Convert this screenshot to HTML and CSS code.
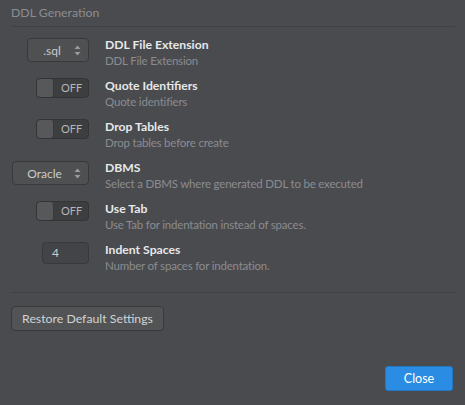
FILE: index.html
```html
<!DOCTYPE html>
<html>
<head>
<meta charset="utf-8">
<link rel="stylesheet" href="styles.css">
</head>
<body>
<div class="dialog">
  <div class="section-title">DDL Generation</div>
  <div class="rows">
    <div class="row">
      <div class="ctl">
        <div class="select sel-sql"><span class="sel-text">.sql</span><svg class="arrows" width="7" height="11" viewBox="0 0 7 11"><path d="M3.5 0.5 L6.5 4 L0.5 4 Z M3.5 10.5 L6.5 7 L0.5 7 Z" fill="#9a9b9d"/></svg></div>
      </div>
      <div class="txt"><div class="t">DDL File Extension</div><div class="d">DDL File Extension</div></div>
    </div>
    <div class="row">
      <div class="ctl"><div class="toggle"><span class="knob"></span><span class="off">OFF</span></div></div>
      <div class="txt"><div class="t">Quote Identifiers</div><div class="d">Quote identifiers</div></div>
    </div>
    <div class="row">
      <div class="ctl"><div class="toggle"><span class="knob"></span><span class="off">OFF</span></div></div>
      <div class="txt"><div class="t">Drop Tables</div><div class="d">Drop tables before create</div></div>
    </div>
    <div class="row">
      <div class="ctl">
        <div class="select sel-dbms"><span class="sel-text">Oracle</span><svg class="arrows" width="7" height="11" viewBox="0 0 7 11"><path d="M3.5 0.5 L6.5 4 L0.5 4 Z M3.5 10.5 L6.5 7 L0.5 7 Z" fill="#9a9b9d"/></svg></div>
      </div>
      <div class="txt"><div class="t">DBMS</div><div class="d">Select a DBMS where generated DDL to be executed</div></div>
    </div>
    <div class="row">
      <div class="ctl"><div class="toggle"><span class="knob"></span><span class="off">OFF</span></div></div>
      <div class="txt"><div class="t">Use Tab</div><div class="d">Use Tab for indentation instead of spaces.</div></div>
    </div>
    <div class="row">
      <div class="ctl"><div class="num">4</div></div>
      <div class="txt"><div class="t">Indent Spaces</div><div class="d">Number of spaces for indentation.</div></div>
    </div>
  </div>
  <div class="divider"></div>
  <div class="restore-wrap"><button class="btn">Restore Default Settings</button></div>
  <div class="footer"><button class="btn-primary">Close</button></div>
</div>
</body>
</html>
```

FILE: styles.css
```css
html, body {
  margin: 0;
  padding: 0;
  background: #4a4b4f;
  width: 465px;
  height: 405px;
  overflow: hidden;
}
body {
  font-family: Lato, "Open Sans", sans-serif;
  color: #d6d8da;
}
.dialog {
  padding: 0 10px 0 11px;
}
.section-title {
  font-size: 12.3px;
  color: #8c8d91;
  line-height: 16px;
  padding-top: 5px;
  padding-bottom: 5px;
  border-bottom: 1px solid #404145;
}
.rows {
  display: flex;
  flex-direction: column;
  gap: 9px;
  padding-top: 10px;
}
.row {
  display: flex;
  align-items: flex-start;
  height: 32px;
}
.ctl {
  width: 78px;
  display: flex;
  justify-content: flex-end;
  margin-right: 16px;
  flex: none;
}
.txt .t {
  font-size: 12.2px;
  font-weight: bold;
  line-height: 16px;
  color: #e6e8ea;
}
.txt .d {
  font-size: 11.5px;
  letter-spacing: -0.2px;
  line-height: 16px;
  color: #8a8c90;
}
.select {
  box-sizing: border-box;
  height: 24px;
  margin-top: 1px;
  border: 1px solid #38393b;
  border-radius: 4px;
  background: #4f5052;
  display: flex;
  align-items: center;
  font-size: 12px;
  color: #c9cbcd;
  position: relative;
}
.sel-sql { width: 62px; }
.sel-dbms { width: 77px; }
.sel-text {
  flex: 1;
  text-align: center;
  padding-right: 12px;
}
.arrows {
  position: absolute;
  right: 7px;
  top: 6px;
}
.toggle {
  box-sizing: border-box;
  width: 53px;
  height: 20px;
  border: 1px solid #333436;
  border-radius: 4px;
  background: #3d3e40;
  display: flex;
  align-items: stretch;
  overflow: hidden;
}
.knob {
  width: 16px;
  background: #57585a;
  border-right: 1px solid #38393b;
  border-radius: 3px;
}
.off {
  flex: 1;
  text-align: center;
  font-size: 11px;
  line-height: 18px;
  color: #b4b6b8;
  padding-left: 1px;
}
.num {
  box-sizing: border-box;
  width: 47px;
  height: 22px;
  border: 1px solid #38393b;
  border-radius: 4px;
  background: #434447;
  font-size: 12px;
  line-height: 20px;
  padding-left: 9px;
  color: #c9cbcd;
}
.divider {
  border-top: 1px solid #404145;
  margin-top: 18px;
}
.restore-wrap {
  padding-top: 13px;
}
.btn {
  box-sizing: border-box;
  height: 25px;
  width: 153px;
  border: 1px solid #38393b;
  border-radius: 4px;
  background: #525354;
  color: #cfd3d7;
  font-family: Lato, "Open Sans", sans-serif;
  font-size: 12.3px;
  padding: 0;
}
.footer {
  display: flex;
  justify-content: flex-end;
  padding-top: 35px;
  padding-right: 2px;
}
.btn-primary {
  box-sizing: border-box;
  height: 25px;
  width: 68px;
  border: 1px solid #2478c2;
  border-radius: 3px;
  background: #2a8ce2;
  color: #ffffff;
  font-family: Lato, "Open Sans", sans-serif;
  font-size: 12.5px;
  padding: 0;
}
```
